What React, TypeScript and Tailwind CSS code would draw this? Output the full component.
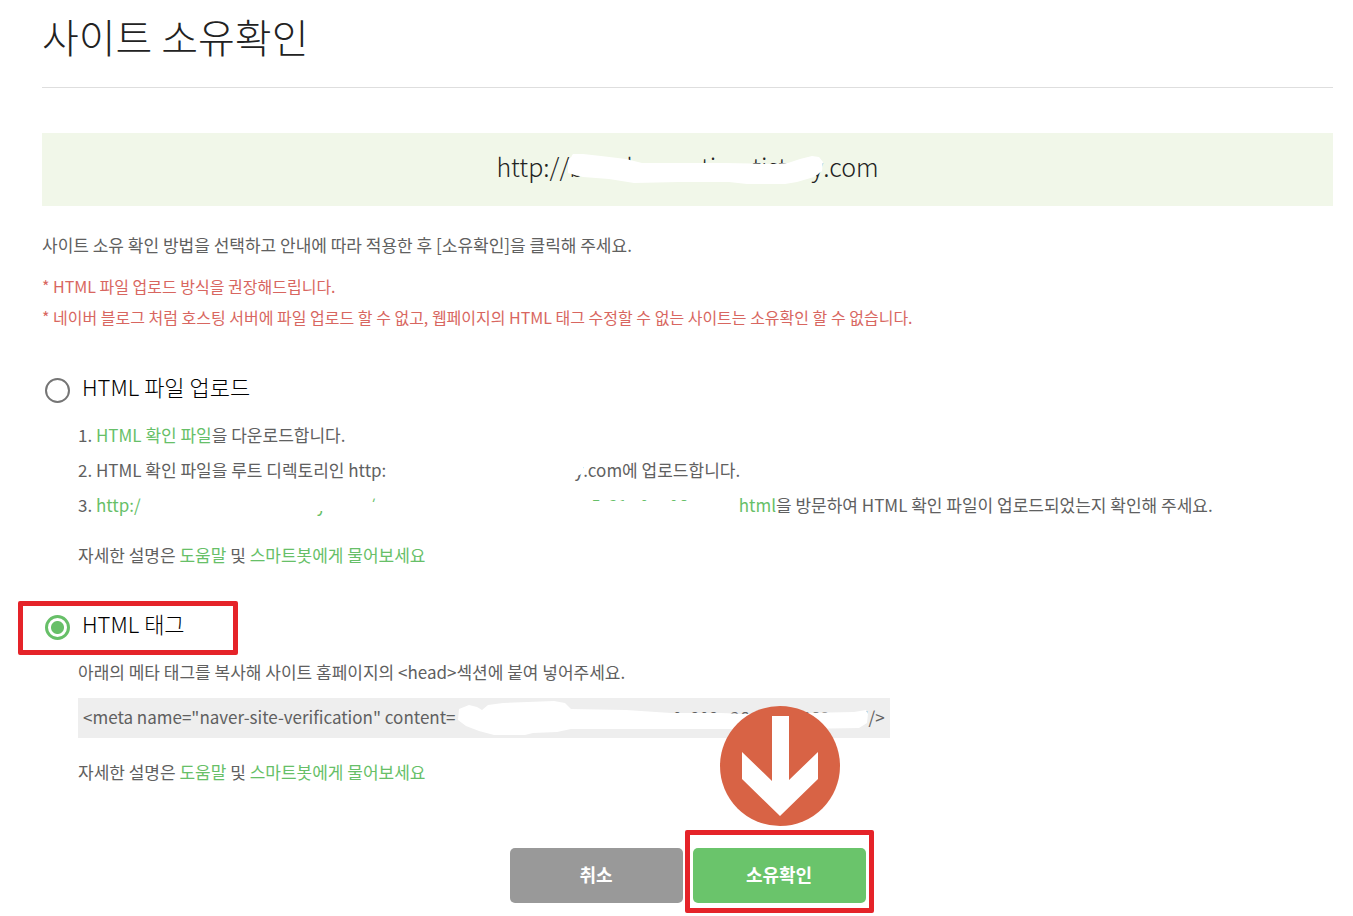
import { useState } from 'react';

type Method = 'file' | 'tag';

const HelpLine = () => (
  <p className="text-[17px] leading-[35px]">
    자세한 설명은{' '}
    <a href="#help" className="text-[#67bf68]">도움말</a> 및{' '}
    <a href="#bot" className="text-[#67bf68]">스마트봇에게 물어보세요</a>
  </p>
);

type MethodOptionProps = {
  id: Method;
  label: string;
  selected: Method;
  onSelect: (id: Method) => void;
  highlighted?: boolean;
};

const MethodOption = ({ id, label, selected, onSelect, highlighted }: MethodOptionProps) => (
  <div className="relative flex h-10 w-fit items-center gap-3 pl-[3px]">
    <input
      id={id}
      type="radio"
      name="method"
      checked={selected === id}
      onChange={() => onSelect(id)}
      className="mt-1 size-[25px] appearance-none rounded-full border-2 border-[#757575] bg-white checked:border-[3px] checked:border-[#67bf68] checked:bg-[radial-gradient(circle,#67bf68_6px,#fff_7px)]"
    />
    <label htmlFor={id} className="pb-1 text-[22px] font-light leading-9 text-black">{label}</label>
    {highlighted && (
      <span className="pointer-events-none absolute -top-1 -bottom-[10px] -left-6 -right-[53px] rounded-xs border-[5px] border-[#e52329]" />
    )}
  </div>
);

const App = () => {
  const [method, setMethod] = useState<Method>('tag');

  return (
    <main className="min-h-screen bg-white pb-3 pl-[42px] pr-5 font-['Noto_Sans_CJK_KR',sans-serif] text-[#606060]">
      <header className="border-b border-[#dedede] pb-[17px]">
        <h1 className="pt-[3px] text-[40px] font-light leading-[67px] text-[#222]">사이트 소유확인</h1>
      </header>

      <div className="mt-[45px] flex h-[73px] items-center justify-center bg-[#f1f7e9] pb-1.5 text-[25px] font-light text-[#222]">
        <span>http://</span>
        <span className="relative flex h-10 w-[254px] items-center">
          <span>b</span>
          <span className="ml-[42px]">l</span>
          <span className="ml-[68px]">ti</span>
          <span className="ml-9">tist</span>
          <span className="ml-auto">y</span>
          <svg viewBox="0 0 254 40" className="absolute inset-0 h-full w-full overflow-visible" aria-hidden="true">
            <path
              d="M-1 14 L4 7 L14 7 L32 9 L57 12 L73 16 L115 16 L156 16 L204 17 L219 16 L231 12 L243 9 L250 10 L254 15 L253 24 L245 30 L228 35 L216 37 L178 37 L160 35 L110 35 L65 36 L40 32 L14 30 L6 28 L-1 26 Z"
              fill="#fff"
            />
          </svg>
        </span>
        <span>.com</span>
      </div>

      <p className="mt-[21px] text-[17px] leading-[35px]">
        사이트 소유 확인 방법을 선택하고 안내에 따라 적용한 후 [소유확인]을 클릭해 주세요.
      </p>
      <div className="mt-[9px] text-base leading-[31px] text-[#d86660]">
        <p>* HTML 파일 업로드 방식을 권장해드립니다.</p>
        <p>* 네이버 블로그 처럼 호스팅 서버에 파일 업로드 할 수 없고, 웹페이지의 HTML 태그 수정할 수 없는 사이트는 소유확인 할 수 없습니다.</p>
      </div>

      <section className="mt-[35px]">
        <MethodOption id="file" label="HTML 파일 업로드" selected={method} onSelect={setMethod} />
        <div className="mt-[9px] pl-9">
          <ol className="text-[17px] leading-[35px]">
            <li>
              1. <a href="#file" className="text-[#67bf68]">HTML 확인 파일</a>을 다운로드합니다.
            </li>
            <li className="flex whitespace-pre">
              2. HTML 확인 파일을 루트 디렉토리인 http:
              <span className="relative flex h-[35px] w-[197px] justify-end">
                <span>y</span>
                <svg viewBox="0 0 197 35" className="absolute inset-0 h-full w-full" aria-hidden="true">
                  <path d="M0 5 L197 5 L197 21 L190 25 L180 28 L0 28 Z" fill="#fff" />
                </svg>
              </span>
              .com에 업로드합니다.
            </li>
            <li className="flex whitespace-pre">
              3. <a href="#visit" className="flex text-[#67bf68]">
                http:/
                <span className="relative flex h-[35px] w-[598px]">
                  <span className="ml-[176px]">y</span>
                  <span className="ml-[43px]">/</span>
                  <span className="ml-[216px]">5</span>
                  <span className="ml-2">21</span>
                  <span className="ml-3">0</span>
                  <span className="ml-5">06</span>
                  <svg viewBox="0 0 598 35" className="absolute inset-0 h-full w-full" aria-hidden="true">
                    <path d="M4 4 L220 4 L222 15 L260 15 L430 14 L598 14 L598 30 L187 30 L181 24 L100 30 L4 30 Z" fill="#fff" />
                  </svg>
                </span>
                html
              </a>을 방문하여 HTML 확인 파일이 업로드되었는지 확인해 주세요.
            </li>
          </ol>
          <div className="mt-[15px]">
            <HelpLine />
          </div>
        </div>
      </section>

      <section className="mt-[33px]">
        <MethodOption id="tag" label="HTML 태그" selected={method} onSelect={setMethod} highlighted />
        <div className="mt-[9px] pl-9">
          <p className="text-[17px] leading-[35px]">
            아래의 메타 태그를 복사해 사이트 홈페이지의 &lt;head&gt;섹션에 붙여 넣어주세요.
          </p>
          <div className="mt-[9px] flex h-10 w-fit items-center whitespace-pre bg-[#eee] px-[5px] pb-0.5 text-[17px]">
            &lt;meta name="naver-site-verification" content=
            <span className="relative flex h-10 w-[413px] items-center">
              <span className="ml-[217px]">0</span>
              <span className="ml-2">808</span>
              <span className="ml-3">26</span>
              <span className="ml-[52px]">868</span>
              <span className="ml-auto">"</span>
              <svg viewBox="0 0 413 40" className="absolute inset-0 h-full w-full" aria-hidden="true">
                <path
                  d="M3 12 L13 8 L21 10 L26 13 L32 8 L47 6 L98 4 L109 6 L115 12 L170 13 L215 16 L265 16 L290 17 L350 16 L398 15 L410 13 L412 17 L411 26 L403 31 L343 32 L253 32 L213 32 L115 32 L101 35 L77 36 L69 38 L38 38 L23 34 L10 29 L2 23 Z"
                  fill="#fff"
                />
              </svg>
            </span>
            /&gt;
          </div>
          <div className="mt-4">
            <HelpLine />
          </div>
        </div>
      </section>

      <div className="mt-[59px] flex justify-center gap-[10px] text-lg font-bold text-white">
        <button type="button" className="h-[55px] w-[173px] rounded-[5px] bg-[#999] pb-1">취소</button>
        <div className="relative">
          <button type="button" className="h-[55px] w-[173px] rounded-[5px] bg-[#6ac46b] pb-1">소유확인</button>
          <span className="pointer-events-none absolute -inset-x-2 -top-[18px] -bottom-[10px] rounded-xs border-[5px] border-[#e52329]" />
          <svg
            viewBox="0 0 120 120"
            className="pointer-events-none absolute bottom-[77px] left-[27px] size-[120px]"
            aria-hidden="true"
          >
            <circle cx="60" cy="60" r="60" fill="#d86345" />
            <path d="M52 10 H69 V74 L98 46 V73 L60 110 L22 73 V46 L52 75 Z" fill="#fff" />
          </svg>
        </div>
      </div>
    </main>
  );
};

export default App;
